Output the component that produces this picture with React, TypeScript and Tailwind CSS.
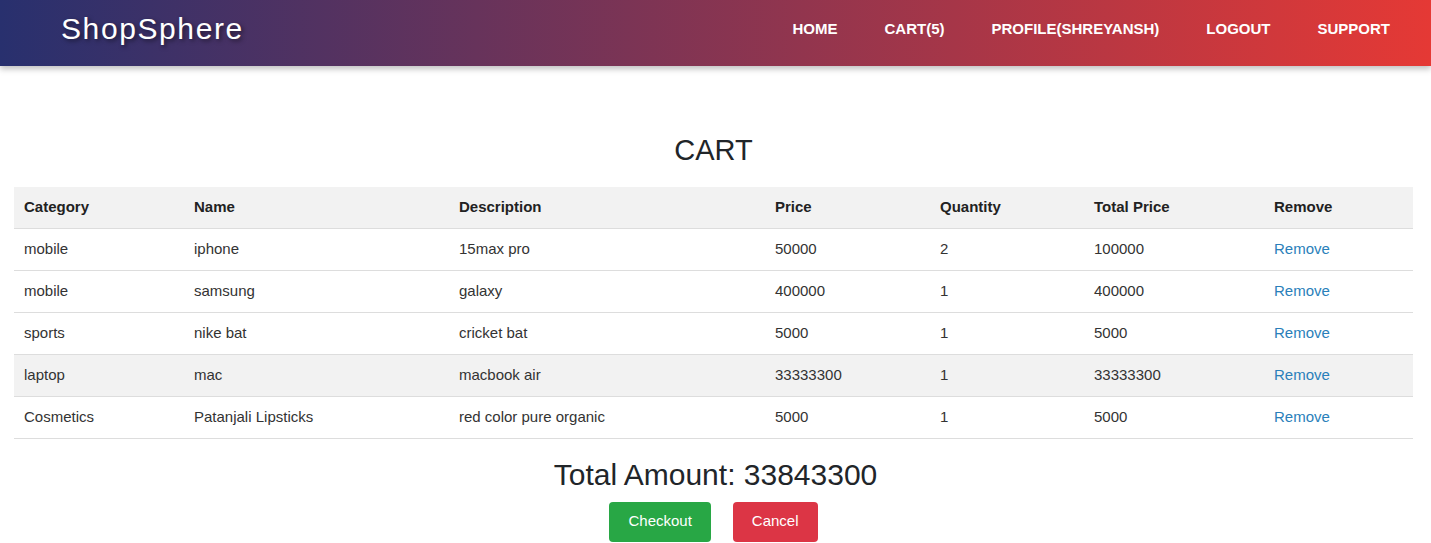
const navLinks = ['HOME', 'CART(5)', 'PROFILE(SHREYANSH)', 'LOGOUT', 'SUPPORT']

const items = [
  { category: 'mobile', name: 'iphone', description: '15max pro', price: 50000, quantity: 2 },
  { category: 'mobile', name: 'samsung', description: 'galaxy', price: 400000, quantity: 1 },
  { category: 'sports', name: 'nike bat', description: 'cricket bat', price: 5000, quantity: 1 },
  { category: 'laptop', name: 'mac', description: 'macbook air', price: 33333300, quantity: 1 },
  { category: 'Cosmetics', name: 'Patanjali Lipsticks', description: 'red color pure organic', price: 5000, quantity: 1 },
]

const hoveredRow = 3

export default function App() {
  const total = items.reduce((sum, it) => sum + it.price * it.quantity, 0)

  return (
    <div className="min-h-screen bg-white font-['Liberation_Sans',Arial,sans-serif] text-[#333]">
      {/* Header */}
      <header className="relative z-10 h-[66px] flex items-start justify-between bg-[linear-gradient(to_right,#28306e,#e53935)] shadow-[0_3px_6px_rgba(0,0,0,0.25)] pl-[61px] pr-[41px]">
        <div className="mt-[12px] text-[30px] leading-[34px] tracking-[1.6px] text-white [text-shadow:2px_2px_4px_rgba(0,0,0,0.5)]">
          ShopSphere
        </div>
        <nav className="flex gap-[47px] mt-[19px]">
          {navLinks.map((l) => (
            <a key={l} href="#" className="text-[15px] leading-[20px] font-bold text-white">
              {l}
            </a>
          ))}
        </nav>
      </header>

      {/* Cart */}
      <main className="pt-[65px]">
        <h2 className="h-[38px] text-center text-[29px] leading-[38px] text-[#212529] mb-[18px] -translate-x-[2px]">CART</h2>

        <table className="ml-[14px] w-[1399px] table-fixed border-collapse text-[15px] leading-[20px]">
          <colgroup>
            <col className="w-[170px]" />
            <col className="w-[265px]" />
            <col className="w-[316px]" />
            <col className="w-[165px]" />
            <col className="w-[154px]" />
            <col className="w-[180px]" />
            <col className="w-[149px]" />
          </colgroup>
          <thead>
            <tr className="bg-[#f2f2f2] border-b border-[#dddddd]">
              {['Category', 'Name', 'Description', 'Price', 'Quantity', 'Total Price', 'Remove'].map((h) => (
                <th key={h} className="h-[41px] px-[10px] text-left font-bold text-[#222]">
                  {h}
                </th>
              ))}
            </tr>
          </thead>
          <tbody>
            {items.map((it, i) => (
              <tr key={i} className={`border-b border-[#dddddd] ${i === hoveredRow ? 'bg-[#f2f2f2]' : ''}`}>
                <td className="h-[42px] px-[10px]">{it.category}</td>
                <td className="px-[10px]">{it.name}</td>
                <td className="px-[10px]">{it.description}</td>
                <td className="px-[10px]">{it.price}</td>
                <td className="px-[10px]">{it.quantity}</td>
                <td className="px-[10px]">{it.price * it.quantity}</td>
                <td className="px-[10px]">
                  <a href="#" className="text-[#2a7fba]">Remove</a>
                </td>
              </tr>
            ))}
          </tbody>
        </table>

        <h3 className="mt-[18px] h-[36px] text-center text-[30px] leading-[36px] text-[#212529]">
          Total Amount: {total}
        </h3>

        <div className="mt-[9px] flex justify-center gap-[22px] -translate-x-[2px]">
          <button className="h-[40px] px-[19px] rounded-[4px] bg-[#28a745] text-white text-[15px]">Checkout</button>
          <button className="h-[40px] px-[19px] rounded-[4px] bg-[#dc3545] text-white text-[15px]">Cancel</button>
        </div>
      </main>
    </div>
  )
}
